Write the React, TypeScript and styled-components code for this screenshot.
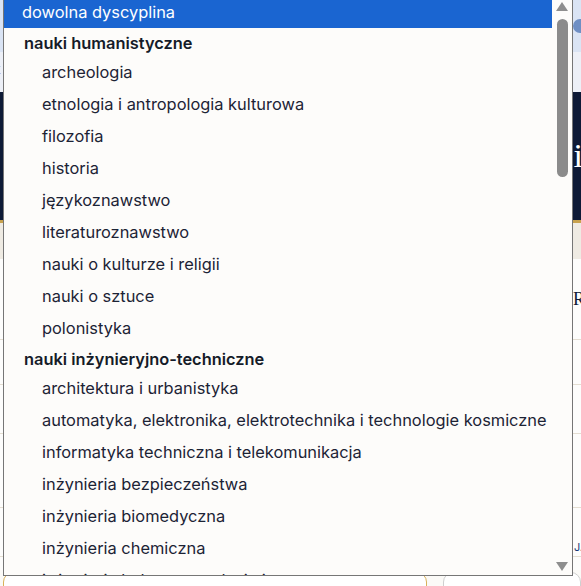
import styled, { createGlobalStyle } from 'styled-components'

const GlobalStyle = createGlobalStyle`
  html, body {
    margin: 0;
    padding: 0;
    background: #fbfaf7;
    font-family: Inter, "Noto Sans", sans-serif;
  }
`

type Item = { label: string; kind: 'top' | 'group' | 'option'; selected?: boolean }

const items: Item[] = [
  { label: 'dowolna dyscyplina', kind: 'top', selected: true },
  { label: 'nauki humanistyczne', kind: 'group' },
  { label: 'archeologia', kind: 'option' },
  { label: 'etnologia i antropologia kulturowa', kind: 'option' },
  { label: 'filozofia', kind: 'option' },
  { label: 'historia', kind: 'option' },
  { label: 'językoznawstwo', kind: 'option' },
  { label: 'literaturoznawstwo', kind: 'option' },
  { label: 'nauki o kulturze i religii', kind: 'option' },
  { label: 'nauki o sztuce', kind: 'option' },
  { label: 'polonistyka', kind: 'option' },
  { label: 'nauki inżynieryjno-techniczne', kind: 'group' },
  { label: 'architektura i urbanistyka', kind: 'option' },
  { label: 'automatyka, elektronika, elektrotechnika i technologie kosmiczne', kind: 'option' },
  { label: 'informatyka techniczna i telekomunikacja', kind: 'option' },
  { label: 'inżynieria bezpieczeństwa', kind: 'option' },
  { label: 'inżynieria biomedyczna', kind: 'option' },
  { label: 'inżynieria chemiczna', kind: 'option' },
  { label: 'inżynieria lądowa, geodezja i transport', kind: 'option' },
]

const App = () => {
  return (
    <>
      <GlobalStyle />
      <Page>
        <TopBar>
          <Avatar />
        </TopBar>
        <SubBar>
          <SubText>t</SubText>
        </SubBar>
        <Banner>
          <BannerTitle>i</BannerTitle>
        </Banner>
        <Strip />
        <Content>
          <ContentRow $h={80}>
            <Heading>R</Heading>
          </ContentRow>
          <ContentRow $h={44} />
          <ContentRow $h={48} />
          <ContentRow $h={73} />
          <ContentRow $h={48}>
            <Small>J.</Small>
          </ContentRow>
        </Content>
        <Inputs>
          <InputBox $accent />
          <InputBox />
        </Inputs>
      </Page>

      <Popup>
        <List>
          {items.map((item) => (
            <Row key={item.label} $kind={item.kind} $selected={item.selected}>
              {item.label}
            </Row>
          ))}
        </List>
        <ScrollTrack>
          <ArrowUp />
          <Thumb />
          <Spacer />
          <ArrowDown />
        </ScrollTrack>
      </Popup>
    </>
  )
}

const Page = styled.div`
  width: 581px;
  height: 586px;
  overflow: hidden;
  display: flex;
  flex-direction: column;
`

const TopBar = styled.div`
  height: 52px;
  background: #dae4f4;
  display: flex;
  align-items: center;
  justify-content: flex-end;
`

const Avatar = styled.div`
  width: 14px;
  height: 14px;
  border-radius: 50%;
  background: #6f8fc4;
  margin-right: -6px;
`

const SubBar = styled.div`
  height: 40px;
  background: #edf0f7;
  display: flex;
  align-items: flex-start;
  font-family: 'Liberation Serif', serif;
`

const SubText = styled.span`
  margin-top: 8px;
  margin-left: -4px;
  color: #8a4b3a;
  font-size: 16px;
`

const Banner = styled.div`
  height: 128px;
  background: #0e1a36;
  display: flex;
  justify-content: flex-end;
  align-items: center;
`

const BannerTitle = styled.span`
  font-family: 'Liberation Serif', serif;
  font-size: 34px;
  color: #ffffff;
  margin-right: -2px;
`

const Strip = styled.div`
  height: 36px;
  background: #efebe3;
  border-top: 3px solid #c8a24e;
`

const Content = styled.div`
  flex: 1;
  background: #fdfdfc;
  display: flex;
  flex-direction: column;
`

const ContentRow = styled.div<{ $h: number }>`
  height: ${(p) => p.$h}px;
  flex-shrink: 0;
  border-bottom: 1px solid #e4ded2;
  display: flex;
  align-items: center;
  justify-content: flex-end;
`

const Heading = styled.span`
  font-family: 'Liberation Serif', serif;
  font-size: 18px;
  color: #0e1a36;
  margin-right: -4px;
`

const Small = styled.span`
  font-size: 11px;
  color: #1c3a7a;
  margin-right: -2px;
  align-self: flex-end;
  margin-bottom: 2px;
`

const Inputs = styled.div`
  height: 14px;
  display: flex;
  gap: 16px;
  padding: 2px 0 0 3px;
  background: #fbfaf7;
`

const InputBox = styled.div<{ $accent?: boolean }>`
  width: ${(p) => (p.$accent ? '433px' : '140px')};
  height: 30px;
  border-radius: 10px;
  border: 1px solid ${(p) => (p.$accent ? '#d9b25a' : '#cfcfcf')};
  background: #ffffff;
`

const Popup = styled.div`
  position: absolute;
  left: 3px;
  top: 0;
  width: 570px;
  height: 576px;
  box-sizing: border-box;
  border: 1px solid #767676;
  border-top: none;
  background: #fdfcfa;
  display: flex;
  overflow: hidden;
`

const List = styled.div`
  width: 548px;
  margin-top: -4px;
  display: flex;
  flex-direction: column;
`

const Row = styled.div<{ $kind: Item['kind']; $selected?: boolean }>`
  flex-shrink: 0;
  height: ${(p) => (p.$kind === 'group' ? 28 : 32)}px;
  line-height: ${(p) => (p.$kind === 'group' ? 30 : 32)}px;
  padding-left: ${(p) => (p.$kind === 'option' ? 38 : p.$kind === 'group' ? 20 : 18)}px;
  font-size: 16.4px;
  font-weight: ${(p) => (p.$kind === 'group' ? 600 : 400)};
  white-space: nowrap;
  color: ${(p) => (p.$selected ? '#ffffff' : p.$kind === 'group' ? '#151b28' : '#1c2335')};
  background: ${(p) => (p.$selected ? '#1a65d1' : 'transparent')};
`

const ScrollTrack = styled.div`
  width: 20px;
  display: flex;
  flex-direction: column;
  align-items: center;
  padding: 2px 0 4px;
  box-sizing: border-box;
`

const ArrowUp = styled.div`
  width: 0;
  height: 0;
  border-left: 6px solid transparent;
  border-right: 6px solid transparent;
  border-bottom: 9px solid #8e8e8e;
`

const ArrowDown = styled.div`
  width: 0;
  height: 0;
  border-left: 6px solid transparent;
  border-right: 6px solid transparent;
  border-top: 9px solid #8e8e8e;
`

const Thumb = styled.div`
  margin-top: 8px;
  width: 11px;
  height: 158px;
  border-radius: 6px;
  background: #8b8b8b;
`

const Spacer = styled.div`
  flex: 1;
`

export default App
